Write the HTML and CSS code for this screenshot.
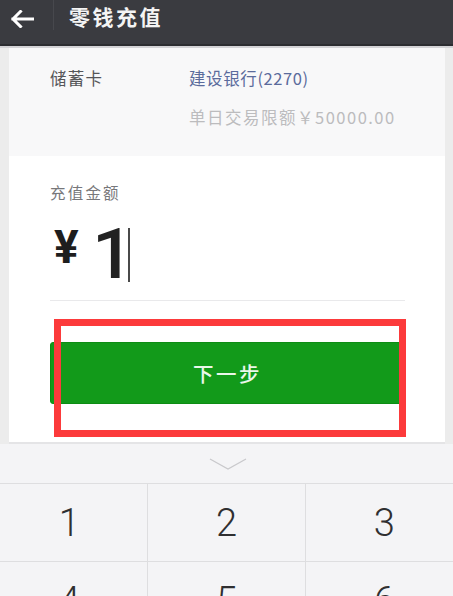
FILE: index.html
```html
<!DOCTYPE html>
<html lang="zh">
<head>
<meta charset="utf-8">
<title>零钱充值</title>
<link rel="stylesheet" href="styles.css">
</head>
<body>
<div class="screen">
  <header class="topbar">
    <svg class="back" width="24" height="18" viewBox="0 0 24 18" aria-hidden="true">
      <path d="M22.5 9 H3 M10.5 1.5 L3 9 L10.5 16.5" fill="none" stroke="#ffffff" stroke-width="3" stroke-linecap="square" stroke-linejoin="miter"/>
    </svg>
    <span class="sep"></span>
    <h1 class="title">零钱充值</h1>
  </header>

  <main class="page">
    <section class="card-info">
      <div class="info-row">
        <span class="info-label">储蓄卡</span>
        <div class="info-value">
          <div class="bank">建设银行(2270)</div>
          <div class="limit">单日交易限额￥50000.00</div>
        </div>
      </div>
    </section>

    <section class="amount-card">
      <div class="amount-label">充值金额</div>
      <div class="amount-row">
        <span class="yen">¥</span>
        <span class="amount">1</span>
        <span class="cursor"></span>
      </div>
      <div class="divider"></div>
      <div class="btn-wrap">
        <button class="next-btn">下一步</button>
        <div class="highlight"></div>
      </div>
    </section>
  </main>

  <section class="keyboard">
    <div class="kb-top">
      <svg width="40" height="14" viewBox="0 0 40 14" aria-hidden="true">
        <path d="M2 2 L20 12 L38 2" fill="none" stroke="#c9c9cc" stroke-width="1.3"/>
      </svg>
    </div>
    <div class="keys">
      <div class="key">1</div>
      <div class="key">2</div>
      <div class="key">3</div>
      <div class="key">4</div>
      <div class="key">5</div>
      <div class="key">6</div>
    </div>
  </section>
</div>
</body>
</html>
```

FILE: styles.css
```css
html, body {
  margin: 0;
  padding: 0;
}
body {
  width: 453px;
  height: 596px;
  overflow: hidden;
  background: #ececec;
  font-family: "Noto Sans CJK SC", "Noto Sans", Roboto, sans-serif;
}
.screen {
  width: 453px;
  height: 596px;
  overflow: hidden;
  display: flex;
  flex-direction: column;
}
.topbar {
  height: 44px;
  flex: 0 0 44px;
  background: #3a3b40;
  border-bottom: 2px solid #2c2d31;
  display: flex;
  align-items: flex-start;
  box-sizing: content-box;
}
.back {
  margin: 10px 0 0 10px;
}
.sep {
  width: 1px;
  height: 30px;
  background: #47484d;
  margin-left: 19px;
}
.title {
  margin: 3px 0 0 15px;
  font-size: 21px;
  line-height: 26px;
  font-weight: 700;
  letter-spacing: 2.5px;
  color: #f4f4f4;
}
.page {
  border-top: 2px solid #d3d3d6;
  padding: 0 8px 0 9px;
  background: #ececec;
}
.card-info {
  background: #f8f8f9;
  padding: 18px 40px 27px 41px;
}
.info-row {
  display: flex;
}
.info-label {
  width: 139px;
  flex: 0 0 139px;
  font-size: 16.5px;
  line-height: 24px;
  letter-spacing: 1.2px;
  color: #555558;
}
.info-value {
  display: flex;
  flex-direction: column;
  gap: 15px;
}
.bank {
  font-size: 16.5px;
  line-height: 24px;
  letter-spacing: 0.6px;
  color: #5b6b9c;
}
.limit {
  font-size: 16.5px;
  line-height: 24px;
  letter-spacing: 1.5px;
  color: #bcbcbe;
}
.amount-card {
  background: #ffffff;
  padding: 25px 40px 38px 41px;
  border-bottom: 2px solid #e4e4e6;
}
.amount-label {
  font-size: 15.5px;
  line-height: 22px;
  letter-spacing: 2.2px;
  color: #77777a;
}
.amount-row {
  display: flex;
  align-items: flex-start;
  margin-top: 16px;
  height: 68px;
}
.yen {
  font-family: Roboto, "Liberation Sans", sans-serif;
  font-weight: 700;
  font-size: 46px;
  line-height: 46px;
  margin-top: 5px;
  margin-left: 4px;
  color: #1e1e1e;
}
.amount {
  font-family: Roboto, "Liberation Sans", sans-serif;
  font-weight: 500;
  font-size: 70px;
  line-height: 70px;
  margin-left: 13px;
  color: #222222;
  transform: scaleX(1.05);
  transform-origin: left center;
}
.cursor {
  width: 2px;
  height: 54px;
  background: #4a4a4a;
  margin-top: 9px;
  margin-left: -3px;
}
.divider {
  height: 1px;
  background: #e9e9eb;
  margin-top: 13px;
}
.btn-wrap {
  position: relative;
  margin-top: 41px;
}
.next-btn {
  display: block;
  width: 100%;
  height: 62px;
  border: 1px solid #0d8c14;
  border-radius: 3px;
  background: #129a1a;
  color: #eaf7ea;
  font-family: "Noto Sans CJK SC", sans-serif;
  font-size: 20.5px;
  font-weight: 500;
  letter-spacing: 2.5px;
  padding: 0;
}
.highlight {
  position: absolute;
  left: 4px;
  top: -23px;
  width: 338px;
  height: 104px;
  border: 7px solid #fc3a3b;
}
.keyboard {
  flex: 1 1 auto;
  background: #f4f4f6;
  margin-left: -9px;
  width: 472px;
}
.kb-top {
  height: 39px;
  border-bottom: 1px solid #dedee0;
  display: flex;
  justify-content: center;
  align-items: flex-start;
  box-sizing: content-box;
}
.kb-top svg {
  margin-top: 13px;
  margin-left: 1px;
}
.keys {
  display: grid;
  grid-template-columns: repeat(3, 1fr);
  grid-auto-rows: 78px;
}
.key {
  display: flex;
  align-items: center;
  justify-content: center;
  font-family: Roboto, "Noto Sans", sans-serif;
  font-weight: 300;
  font-size: 38px;
  color: #2f2f31;
  border-bottom: 1px solid #dedee0;
  border-right: 1px solid #dedee0;
}
.key:nth-child(3n) {
  border-right: none;
}
```
